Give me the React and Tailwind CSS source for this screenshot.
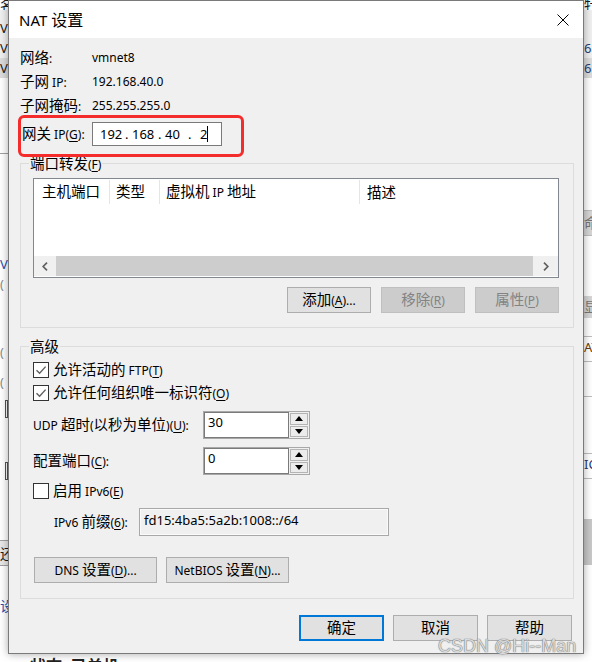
import React from 'react';

const CJK = /([\u2E80-\u9FFF\u3000-\u303F\uFF00-\uFFEF]+)/;

// win32 style label: "&X" underlines X, CJK runs get the bigger fallback size
function Txt({ t, big = 'text-[14.5px]' }) {
    const out = [];
    t.split(/&(.)/).forEach((seg, i) => {
        if (i % 2) {
            out.push(<span key={'m' + i} className="underline underline-offset-[2px]">{seg}</span>);
            return;
        }
        seg.split(CJK).forEach((run, j) => {
            if (!run) return;
            out.push(
                CJK.test(run)
                    ? <span key={i + '.' + j} className={big}>{run}</span>
                    : <span key={i + '.' + j}>{run}</span>
            );
        });
    });
    return out;
}

function Btn({ t, w = 'w-[84px]', off, main }) {
    let cls = 'h-[26px] shrink-0 flex items-center justify-center ' + w;
    if (main) cls += ' border-2 border-[#0078d7] bg-[#e1e1e1]';
    else if (off) cls += ' border border-[#bfbfbf] bg-[#cccccc] text-[#838383]';
    else cls += ' border border-[#adadad] bg-[#e1e1e1]';
    return (
        <div className={cls}>
            <span><Txt t={t} /></span>
        </div>
    );
}

function Group({ label, className, children }) {
    return (
        <fieldset className={'border border-[#dcdcdc] min-w-0 ' + className}>
            <legend className="ml-[8px] px-[1px] h-[16px] leading-[16px]"><Txt t={label} /></legend>
            {children}
        </fieldset>
    );
}

function Check({ on, t, className = '' }) {
    return (
        <div className={'flex items-center h-[16px] ' + className}>
            <div className="w-[16px] h-[16px] border border-[#333333] bg-white flex items-center justify-center">
                {on && (
                    <svg width="12" height="12" viewBox="0 0 12 12">
                        <path d="M1.5 6.2 L4.6 9.3 L10.6 2.6" fill="none" stroke="#5f5f5f" strokeWidth="1.4" />
                    </svg>
                )}
            </div>
            <span className="ml-[4px]"><Txt t={t} /></span>
        </div>
    );
}

function Tri({ down }) {
    return (
        <svg width="8" height="5" viewBox="0 0 8 5">
            <path d={down ? 'M0 0 L8 0 L4 5Z' : 'M4 0 L8 5 L0 5Z'} fill="#000" />
        </svg>
    );
}

function Spin({ v }) {
    return (
        <div className="w-[107px] h-[28px] border border-[#a8a8a8] flex">
            <div className="flex-1 bg-white border border-[#7a7a7a] pl-[3px] leading-[18px] text-[13px]">{v}</div>
            <div className="w-[20px] flex flex-col gap-[1px] p-[1px] bg-[#f0f0f0]">
                <div className="flex-1 border border-[#b4b4b4] bg-[#ececec] flex items-center justify-center"><Tri /></div>
                <div className="flex-1 border border-[#b4b4b4] bg-[#ececec] flex items-center justify-center"><Tri down /></div>
            </div>
        </div>
    );
}

function Info({ k, v }) {
    return (
        <div className="h-[24px] flex items-center">
            <span className="w-[72px]"><Txt t={k} /></span>
            <span>{v}</span>
        </div>
    );
}

function Col({ t, w, pl }) {
    return (
        <div className={'h-[24px] mt-[1px] flex items-center border-r border-[#e5e5e5] ' + w + ' ' + pl}>
            <span><Txt t={t} /></span>
        </div>
    );
}

const App = () => {
    return (
        <div className="w-[592px] h-[662px] relative overflow-hidden bg-white text-black text-[12px] leading-[16px] font-['Noto_Sans','Noto_Sans_CJK_SC',sans-serif]">
            <div className="flex h-[654px]">
                {/* window behind, left edge */}
                <div className="w-[8px] shrink-0 overflow-hidden flex flex-col text-[13px] leading-[20px] text-[#1a1a1a]">
                    <div className="h-[10px] leading-[10px] text-[14px] overflow-hidden">名</div>
                    <div className="h-[8px] bg-[#f0f0f0]" />
                    <div className="h-[20px] bg-[#f0f0f0]">V</div>
                    <div className="h-[20px] bg-[#f0f0f0]">V</div>
                    <div className="h-[20px] bg-[#dcdcdc]">V</div>
                    <div className="h-[75px]" />
                    <div className="h-px bg-[#a0a0a0]" />
                    <div className="h-[100px]" />
                    <div className="h-[20px] text-[#2a4fb0]">V</div>
                    <div className="h-[20px] text-[#8a8a8a]">(</div>
                    <div className="h-[48px]" />
                    <div className="h-[20px] text-[#8a8a8a]">(</div>
                    <div className="h-[10px]" />
                    <div className="h-[20px] text-[#8a8a8a]">(</div>
                    <div className="h-[8px]" />
                    <div className="h-[18px] border border-[#555] ml-[5px]" />
                    <div className="h-[44px]" />
                    <div className="h-[18px] border border-[#555] ml-[5px]" />
                    <div className="h-[60px]" />
                    <div className="h-[26px] leading-[26px] text-[14px] bg-[#e8e8e8] border-y border-[#a0a0a0]">还</div>
                    <div className="h-[30px]" />
                    <div className="h-[20px] text-[14px] text-[#2a4fb0]">设</div>
                </div>

                {/* NAT dialog */}
                <div className="w-[576px] h-[654px] shrink-0 relative z-10 border border-[#7a7a7a] flex flex-col bg-[#f0f0f0] shadow-[0_0_8px_rgba(0,0,0,0.35)]">
                    <div className="h-[37px] bg-white flex items-center pl-[10px] pr-[14px]">
                        <span className="text-[15px]"><Txt t="NAT 设置" big="text-[16px]" /></span>
                        <svg className="ml-auto" width="12" height="12" viewBox="0 0 12 12">
                            <path d="M0.5 0.5 L11.5 11.5 M11.5 0.5 L0.5 11.5" stroke="#000" strokeWidth="1" />
                        </svg>
                    </div>

                    <div className="flex-1 flex flex-col pt-[8px] pl-[11px] pr-[9px]">
                        <Info k="网络:" v="vmnet8" />
                        <Info k="子网 IP:" v="192.168.40.0" />
                        <Info k="子网掩码:" v="255.255.255.0" />

                        <div className="mt-[4px] h-[24px] flex items-center">
                            <span className="w-[72px] pl-[2px]"><Txt t="网关 IP(&G):" /></span>
                            <div className="w-[130px] h-[24px] border border-[#7a7a7a] bg-white flex items-center pl-[7px] text-[13px]">
                                <span className="w-[25px]">192</span>
                                <span className="w-[7px]">.</span>
                                <span className="w-[26px]">168</span>
                                <span className="w-[7px]">.</span>
                                <span className="w-[23px]">40</span>
                                <span className="w-[12px]">.</span>
                                <span className="w-[7px]">2</span>
                                <span className="w-px h-[16px] bg-black" />
                            </div>
                        </div>

                        <Group label="端口转发(&F)" className="mt-[9px] pb-[14px]">
                            <div className="mt-[7px] ml-[12px] mr-[14px] h-[100px] border border-[#828790] bg-white flex flex-col">
                                <div className="h-[26px] flex">
                                    <Col t="主机端口" w="w-[76px]" pl="pl-[8px]" />
                                    <Col t="类型" w="w-[50px]" pl="pl-[6px]" />
                                    <Col t="虚拟机 IP 地址" w="w-[200px]" pl="pl-[6px]" />
                                    <div className="flex-1 flex items-center pl-[7px]"><Txt t="描述" /></div>
                                </div>
                                <div className="flex-1" />
                                <div className="h-[20px] mb-[1px] flex">
                                    <div className="w-[22px] bg-[#f0f0f0] flex items-center justify-center">
                                        <svg width="6" height="9" viewBox="0 0 6 9">
                                            <path d="M5 0.7 L1.2 4.5 L5 8.3" fill="none" stroke="#606060" strokeWidth="1.7" />
                                        </svg>
                                    </div>
                                    <div className="flex-1 bg-[#cdcdcd]" />
                                    <div className="w-[25px] bg-[#f0f0f0] flex items-center justify-center">
                                        <svg width="6" height="9" viewBox="0 0 6 9">
                                            <path d="M1 0.7 L4.8 4.5 L1 8.3" fill="none" stroke="#606060" strokeWidth="1.7" />
                                        </svg>
                                    </div>
                                </div>
                            </div>
                            <div className="mt-[9px] mr-[14px] flex justify-end gap-[10px]">
                                <Btn t="添加(&A)..." />
                                <Btn t="移除(&R)" off />
                                <Btn t="属性(&P)" off />
                            </div>
                        </Group>

                        <Group label="高级" className="mt-[10px] pb-[15px]">
                            <div className="pl-[12px] flex flex-col">
                                <Check on t="允许活动的 FTP(&T)" className="mt-[8px]" />
                                <Check on t="允许任何组织唯一标识符(&O)" className="mt-[7px]" />
                                <div className="mt-[10px] flex items-center">
                                    <span className="w-[170px]"><Txt t="UDP 超时(以秒为单位)(&U):" /></span>
                                    <Spin v="30" />
                                </div>
                                <div className="mt-[8px] flex items-center">
                                    <span className="w-[170px]"><Txt t="配置端口(&C):" /></span>
                                    <Spin v="0" />
                                </div>
                                <Check t="启用 IPv6(&E)" className="mt-[8px]" />
                                <div className="mt-[9px] pl-[21px] flex items-center">
                                    <span className="w-[85px]"><Txt t="IPv6 前缀(&6):" /></span>
                                    <div className="w-[250px] h-[28px] border border-[#a8a8a8] shadow-[inset_0_0_0_1px_#fafafa] pl-[4px] pt-[2px] leading-[18px] text-[13px]">
                                        fd15:4ba5:5a2b:1008::/64
                                    </div>
                                </div>
                                <div className="mt-[21px] pl-[1px] flex gap-[9px]">
                                    <Btn t="DNS 设置(&D)..." w="w-[123px]" />
                                    <Btn t="NetBIOS 设置(&N)..." w="w-[123px]" />
                                </div>
                            </div>
                        </Group>

                        <div className="mt-[16px] mr-[2px] flex justify-end gap-[9px]">
                            <Btn t="确定" w="w-[85px]" main />
                            <Btn t="取消" w="w-[85px]" />
                            <Btn t="帮助" w="w-[85px]" />
                        </div>
                    </div>

                    {/* red highlight drawn over the gateway field */}
                    <div className="absolute left-[9px] top-[114px] w-[226px] h-[42px] border-[3px] border-[#f42c2c] rounded-[6px]" />
                </div>

                {/* window behind, right edge */}
                <div className="flex-1 overflow-hidden flex flex-col bg-[#f4f4f4] text-[13px] leading-[20px] text-[#1a1a1a]">
                    <div className="h-[10px] leading-[10px] text-[14px] overflow-hidden bg-white">牡</div>
                    <div className="h-[28px] bg-[#f0f0f0]" />
                    <div className="h-[20px] bg-[#f0f0f0] text-[#27407a]">68</div>
                    <div className="h-[20px] bg-[#dcdcdc] text-[#27407a]">68</div>
                    <div className="h-[132px] bg-white" />
                    <div className="h-px bg-[#bdbdbd]" />
                    <div className="h-[24px] bg-[#d6d6d6] text-[#777] text-[14px] leading-[24px]">命</div>
                    <div className="h-px bg-[#bdbdbd]" />
                    <div className="h-[60px] bg-white" />
                    <div className="h-[22px] bg-[#d6d6d6] text-[#777] text-[14px] leading-[22px]">显</div>
                    <div className="h-[18px] bg-white" />
                    <div className="h-px bg-[#bdbdbd]" />
                    <div className="h-[24px] bg-white text-[#6b3c0c]">AT</div>
                    <div className="h-px bg-[#bdbdbd]" />
                    <div className="h-[34px] bg-white" />
                    <div className="h-px bg-[#bdbdbd]" />
                    <div className="h-[56px] bg-white" />
                    <div className="h-px bg-[#bdbdbd]" />
                    <div className="h-[24px] bg-white text-[#2a3d7a]">IC</div>
                    <div className="h-px bg-[#bdbdbd]" />
                    <div className="h-[40px] bg-white" />
                    <div className="h-[46px] bg-[#c8c8c8]" />
                    <div className="flex-1 bg-white" />
                </div>
            </div>

            {/* window behind, bottom edge */}
            <div className="h-[8px] overflow-hidden pl-[30px] font-bold text-[16px] leading-[24px] text-[#222]">
                状态: 已关机
            </div>

            {/* CSDN watermark */}
            <div className="absolute left-[438px] top-[634px] z-20 text-[18px] leading-[24px] font-['Liberation_Sans',sans-serif] text-[#dadada] [text-shadow:0_0_1px_#707070,0_0_1px_#707070]">
                CSDN @Hi--Man
            </div>
        </div>
    );
};

export default App;
